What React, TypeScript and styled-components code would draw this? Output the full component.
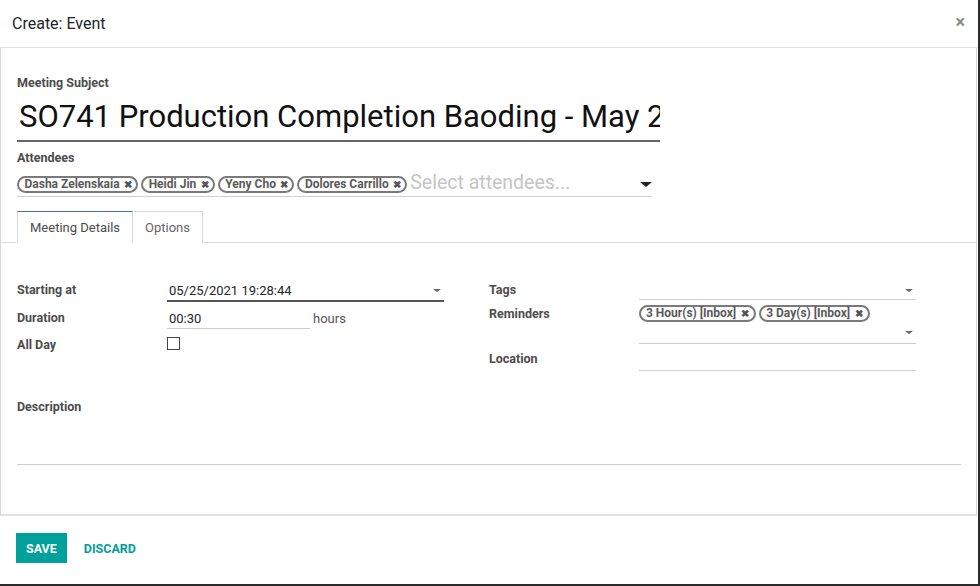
import React from "react";
import styled, { createGlobalStyle } from "styled-components";

const Global = createGlobalStyle`
  html, body { margin: 0; padding: 0; background: #2b2b2b; }
  body { font-family: Roboto, "Noto Sans", sans-serif; color: #212529; width: 980px; height: 586px; overflow: hidden; }
  * { box-sizing: border-box; }
`;

const Modal = styled.div`
  width: 978px;
  height: 584px;
  background: #fff;
  display: flex;
  flex-direction: column;
`;

const Header = styled.div`
  height: 48px;
  flex: none;
  display: flex;
  align-items: center;
  justify-content: space-between;
  padding: 0 13px 1px 12px;
  border-bottom: 1px solid #dee2e6;
`;

const Title = styled.div`
  font-size: 16px;
  color: #212529;
`;

const Close = styled.span`
  font-size: 18px;
  font-weight: 700;
  color: #8a8a8a;
  line-height: 1;
  margin-top: -2px;
`;

const Body = styled.div`
  flex: none;
  height: 468px;
  border: 1px solid #d4d8de;
  border-top: none;
  border-bottom: 2px solid #dde1e6;
  margin-right: 1px;
  display: flex;
  flex-direction: column;
`;

const Sheet = styled.div`
  padding: 28px 16px 0 16px;
  display: flex;
  flex-direction: column;
`;

const Label = styled.div`
  font-size: 12.5px;
  font-weight: 700;
  color: #4c4c4c;
  line-height: 14px;
`;

const SubjectInput = styled.div`
  width: 643px;
  margin-top: 8px;
  height: 44px;
  border-bottom: 2px solid #666;
  font-size: 31px;
  line-height: 38px;
  white-space: nowrap;
  overflow: hidden;
  padding-left: 2px;
  color: #111;
`;

const AttLabel = styled(Label)`
  margin-top: 9px;
`;

const AttField = styled.div`
  width: 635px;
  margin-top: 9px;
  height: 23px;
  padding-bottom: 1px;
  display: flex;
  align-items: center;
  border-bottom: 1px solid #cfcfcf;
`;

const Tag = styled.span`
  display: inline-flex;
  align-items: center;
  gap: 4.5px;
  height: 17px;
  padding: 0 4px 0 5.5px;
  margin-right: 3px;
  border: 2px solid #7a7a7a;
  border-radius: 9px;
  font-size: 12px;
  font-weight: 700;
  color: #5a5a5a;
  white-space: nowrap;
  line-height: 13px;
`;

const TagX = styled.span`
  font-size: 10px;
  color: #555;
`;

const Placeholder = styled.span`
  flex: 1;
  font-size: 19.5px;
  color: #c5c5c5;
  white-space: nowrap;
  line-height: 1;
  margin-top: -4px;
`;

const Caret = styled.span<{ $big?: boolean; $c?: string }>`
  width: 0;
  height: 0;
  flex: none;
  border-left: ${(p) => (p.$big ? 6 : 4)}px solid transparent;
  border-right: ${(p) => (p.$big ? 6 : 4)}px solid transparent;
  border-top: ${(p) => (p.$big ? 5 : 3)}px solid ${(p) => p.$c || "#222"};
  margin-right: ${(p) => (p.$big ? 0 : 3)}px;
`;

const Tabs = styled.div`
  margin-top: 14px;
  height: 32px;
  display: flex;
  padding-left: 16px;
  border-bottom: 1px solid #d7dbe0;
`;

const Tab = styled.div<{ $active?: boolean }>`
  height: 32px;
  padding: 0 12px;
  display: flex;
  align-items: center;
  font-size: 13px;
  color: ${(p) => (p.$active ? "#4c4c4c" : "#666")};
  border: 1px solid #d7dbe0;
  border-top: ${(p) => (p.$active ? "1px solid #4a6e9e" : "1px solid #d7dbe0")};
  border-bottom: ${(p) => (p.$active ? "1px solid #fff" : "none")};
  border-left: ${(p) => (p.$active ? "1px solid #d7dbe0" : "none")};
  background: #fff;
  margin-bottom: -1px;
`;

const TabBody = styled.div`
  padding: 38px 16px 0 16px;
  display: flex;
  flex-direction: column;
`;

const Columns = styled.div`
  display: grid;
  grid-template-columns: 427px 427px;
  column-gap: 45px;
`;

const Group = styled.div`
  display: grid;
  grid-template-columns: 150px 277px;
  align-content: start;
`;

const RowLabel = styled(Label)<{ $h: number }>`
  height: ${(p) => p.$h}px;
  padding-top: 2px;
`;

const Cell = styled.div<{ $h: number }>`
  height: ${(p) => p.$h}px;
  display: flex;
  flex-direction: column;
`;

const LineInput = styled.div<{ $w?: number; $focus?: boolean; $h?: number }>`
  width: ${(p) => (p.$w ? `${p.$w}px` : "100%")};
  height: ${(p) => p.$h || 20}px;
  display: flex;
  align-items: center;
  justify-content: space-between;
  padding-left: 2px;
  font-size: 13px;
  color: #212529;
  border-bottom: ${(p) => (p.$focus ? "2px solid #555" : "1px solid #cfcfcf")};
`;

const Inline = styled.div`
  display: flex;
  align-items: flex-end;
  gap: 3px;
`;

const Unit = styled.span`
  font-size: 13px;
  color: #555;
  padding-bottom: 3px;
`;

const Check = styled.span`
  width: 13px;
  height: 13px;
  border: 1px solid #444;
  margin-top: 1px;
`;

const RemTags = styled.div`
  display: flex;
  align-items: center;
  height: 17px;
`;

const RemTag = styled(Tag)`
  padding: 0 5px 0 5px;
  gap: 5px;
`;

const DescLabel = styled(Label)`
  margin-top: 22px;
`;

const DescArea = styled.div`
  margin-top: 50px;
  border-bottom: 1px solid #cfcfcf;
  width: 944px;
`;

const Footer = styled.div`
  flex: 1;
  display: flex;
  align-items: flex-start;
  padding: 17px 16px 0 16px;
  gap: 17px;
`;

const SaveBtn = styled.button`
  height: 30px;
  padding: 0 10px;
  background: #00a09d;
  color: #fff;
  border: none;
  font-family: Roboto, sans-serif;
  font-weight: 700;
  font-size: 12.5px;
`;

const DiscardBtn = styled.button`
  height: 30px;
  padding: 0;
  background: none;
  border: none;
  color: #00a09d;
  font-family: Roboto, sans-serif;
  font-weight: 700;
  font-size: 12.5px;
`;

const attendees = ["Dasha Zelenskaia", "Heidi Jin", "Yeny Cho", "Dolores Carrillo"];

export default function App() {
  return (
    <>
      <Global />
      <Modal>
        <Header>
          <Title>Create: Event</Title>
          <Close>×</Close>
        </Header>
        <Body>
          <Sheet>
            <Label>Meeting Subject</Label>
            <SubjectInput>SO741 Production Completion Baoding - May 25</SubjectInput>
            <AttLabel>Attendees</AttLabel>
            <AttField>
              {attendees.map((a) => (
                <Tag key={a}>
                  {a}
                  <TagX>✖</TagX>
                </Tag>
              ))}
              <Placeholder>Select attendees...</Placeholder>
              <Caret $big />
            </AttField>
          </Sheet>
          <Tabs>
            <Tab $active>Meeting Details</Tab>
            <Tab>Options</Tab>
          </Tabs>
          <TabBody>
            <Columns>
              <Group>
                <RowLabel $h={28}>Starting at</RowLabel>
                <Cell $h={28}>
                  <LineInput $focus $h={21}>
                    05/25/2021 19:28:44
                    <Caret $c="#666" />
                  </LineInput>
                </Cell>
                <RowLabel $h={27}>Duration</RowLabel>
                <Cell $h={27}>
                  <Inline>
                    <LineInput $w={143} $h={20}>00:30</LineInput>
                    <Unit>hours</Unit>
                  </Inline>
                </Cell>
                <RowLabel $h={24}>All Day</RowLabel>
                <Cell $h={24}>
                  <Check />
                </Cell>
              </Group>
              <Group>
                <RowLabel $h={24}>Tags</RowLabel>
                <Cell $h={24}>
                  <LineInput $h={19}>
                    <span />
                    <Caret $c="#666" />
                  </LineInput>
                </Cell>
                <RowLabel $h={45}>Reminders</RowLabel>
                <Cell $h={45}>
                  <RemTags>
                    <RemTag>
                      3 Hour(s) [Inbox]<TagX>✖</TagX>
                    </RemTag>
                    <RemTag>
                      3 Day(s) [Inbox]<TagX>✖</TagX>
                    </RemTag>
                  </RemTags>
                  <LineInput $h={22}>
                    <span />
                    <Caret $c="#666" />
                  </LineInput>
                </Cell>
                <RowLabel $h={28}>Location</RowLabel>
                <Cell $h={28}>
                  <LineInput $h={21} />
                </Cell>
              </Group>
            </Columns>
            <DescLabel>Description</DescLabel>
            <DescArea />
          </TabBody>
        </Body>
        <Footer>
          <SaveBtn>SAVE</SaveBtn>
          <DiscardBtn>DISCARD</DiscardBtn>
        </Footer>
      </Modal>
    </>
  );
}
